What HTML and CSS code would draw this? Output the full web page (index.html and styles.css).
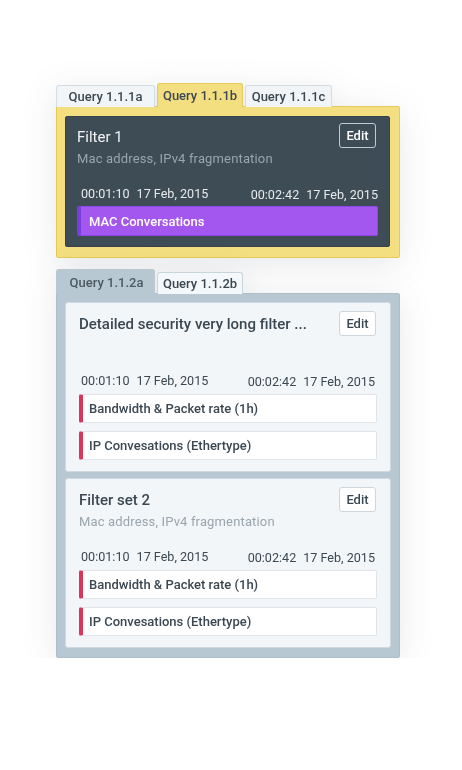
FILE: index.html
```html
<!DOCTYPE html>
<html lang="en">
<head>
<meta charset="utf-8">
<title>Queries</title>
<link rel="stylesheet" href="styles.css">
</head>
<body>
<div class="page">
  <section class="group group--yellow">
    <div class="tabs">
      <div class="tab tab--first">Query 1.1.1a</div>
      <div class="tab tab--active">Query 1.1.1b</div>
      <div class="tab">Query 1.1.1c</div>
    </div>
    <div class="panel">
      <div class="card card--dark">
        <div class="card-head">
          <div class="card-title">Filter 1</div>
          <button class="edit">Edit</button>
        </div>
        <div class="card-sub">Mac address, IPv4 fragmentation</div>
        <div class="times">
          <span class="time"><span>00:01:10</span><span>17 Feb, 2015</span></span>
          <span class="time time--end"><span>00:02:42</span><span>17 Feb, 2015</span></span>
        </div>
        <div class="bars">
          <div class="bar bar--purple">MAC Conversations</div>
        </div>
      </div>
    </div>
  </section>

  <section class="group group--blue">
    <div class="tabs">
      <div class="tab tab--first tab--active">Query 1.1.2a</div>
      <div class="tab">Query 1.1.2b</div>
    </div>
    <div class="panel">
      <div class="card">
        <div class="card-head">
          <div class="card-title">Detailed security very long filter ...</div>
          <button class="edit">Edit</button>
        </div>
        <div class="card-sub"></div>
        <div class="times">
          <span class="time"><span>00:01:10</span><span>17 Feb, 2015</span></span>
          <span class="time time--end"><span>00:02:42</span><span>17 Feb, 2015</span></span>
        </div>
        <div class="bars">
          <div class="bar">Bandwidth &amp; Packet rate (1h)</div>
          <div class="bar">IP Convesations (Ethertype)</div>
        </div>
      </div>
      <div class="card">
        <div class="card-head">
          <div class="card-title">Filter set 2</div>
          <button class="edit">Edit</button>
        </div>
        <div class="card-sub">Mac address, IPv4 fragmentation</div>
        <div class="times">
          <span class="time"><span>00:01:10</span><span>17 Feb, 2015</span></span>
          <span class="time time--end"><span>00:02:42</span><span>17 Feb, 2015</span></span>
        </div>
        <div class="bars">
          <div class="bar">Bandwidth &amp; Packet rate (1h)</div>
          <div class="bar">IP Convesations (Ethertype)</div>
        </div>
      </div>
    </div>
  </section>
</div>
</body>
</html>
```

FILE: styles.css
```css
* { box-sizing: border-box; }

html, body {
  margin: 0;
  background: #ffffff;
}

body {
  font-family: Roboto, "Noto Sans", "Liberation Sans", sans-serif;
  color: #3b4852;
  -webkit-font-smoothing: antialiased;
}

.page {
  padding: 83px 0 0 56px;
  width: 400px;
  display: flex;
  flex-direction: column;
  gap: 12px;
}

.group {
  display: flex;
  flex-direction: column;
  filter: drop-shadow(0 6px 16px rgba(40, 50, 60, 0.11));
}

/* Tabs */
.tabs {
  display: flex;
  align-items: flex-end;
  gap: 2px;
  height: 24px;
  margin-bottom: -1px;
  position: relative;
  z-index: 1;
}

.tab {
  width: 87px;
  height: 22px;
  display: flex;
  align-items: center;
  justify-content: center;
  font-size: 13px;
  font-weight: 500;
  color: #3b4852;
  background: #f2f5f8;
  border: 1px solid #d3dce2;
  border-bottom: none;
  border-radius: 3px 3px 0 0;
  white-space: nowrap;
}

.tab--first {
  width: 99px;
}

.group--yellow .tab--active {
  width: 86px;
  height: 24px;
  background: #f3df80;
  border-color: #e6c957;
  color: #3d4952;
}

.group--blue .tab {
  background: #f5f8fa;
  border-color: #c9d4db;
  width: 86px;
}

.group--blue .tab--active {
  width: 99px;
  height: 25px;
  background: #b8c8d2;
  border-color: #b8c8d2;
  color: #4c5962;
  padding-left: 2px;
}

/* Panels */
.panel {
  display: flex;
  flex-direction: column;
  gap: 6px;
  width: 344px;
}

.group--yellow .panel {
  background: #f3df80;
  border: 1px solid #e6c957;
  border-radius: 0 2px 2px 2px;
  padding: 9px 9px 10px 8px;
}

.group--blue .panel {
  background: #b8c8d2;
  border: 1px solid #adbec9;
  border-radius: 0 2px 2px 2px;
  padding: 8px 8px 9px 8px;
}

/* Cards */
.card {
  background: #f3f6f9;
  border: 1px solid #d0d9df;
  border-radius: 3px;
  padding: 8px 13px 11px 13px;
  display: flex;
  flex-direction: column;
}

.card--dark {
  background: #3e4c56;
  border-color: #36434c;
  border-radius: 2px;
  padding: 6px 11px 10px 11px;
}

.card-head {
  display: flex;
  justify-content: space-between;
  align-items: center;
  height: 25px;
}

.card-title {
  font-size: 15px;
  font-weight: 500;
  color: #3b4852;
  white-space: nowrap;
  padding-top: 1px;
}

.card--dark .card-title {
  font-weight: 400;
  color: #f1f3f5;
  padding-top: 2px;
}

.edit {
  font-family: inherit;
  font-size: 13px;
  font-weight: 500;
  color: #3b4852;
  background: #ffffff;
  border: 1px solid #cdd6dc;
  border-radius: 3px;
  width: 37px;
  height: 25px;
  padding: 0;
  margin-right: 1px;
}

.card--dark .edit {
  background: transparent;
  color: #ffffff;
  border-color: #c3cbd1;
  margin-right: 2px;
}

.card-sub {
  margin-top: 2px;
  height: 16px;
  line-height: 16px;
  font-size: 13px;
  letter-spacing: 0.15px;
  color: #9ba5ad;
}

.card--dark .card-sub {
  margin-top: 3px;
  color: #9aa5ad;
}

.times {
  margin-top: 19px;
  height: 16px;
  display: flex;
  justify-content: space-between;
  align-items: flex-end;
  padding: 0 2px 0 2px;
  font-size: 12.6px;
  line-height: 16px;
  color: #3b4852;
}

.card--dark .times {
  margin-top: 19px;
  padding: 0 0 0 4px;
  color: #e6eaed;
}

.time {
  display: flex;
  gap: 7px;
}

.time--end {
  position: relative;
  top: 1px;
}

.bars {
  margin-top: 5px;
  display: flex;
  flex-direction: column;
  gap: 8px;
}

.card--dark .bars {
  margin-top: 4px;
}

.bar {
  height: 29px;
  display: flex;
  align-items: center;
  padding-left: 6px;
  background: #ffffff;
  border: 1px solid #dfe5ea;
  border-left: 4px solid #d8365b;
  border-radius: 2px;
  font-size: 13px;
  font-weight: 500;
  color: #3b4852;
}

.bar--purple {
  height: 30px;
  background: #a457ef;
  border-color: #8c47e4;
  border-left-color: #7a3de0;
  padding-left: 8px;
  color: #ffffff;
}
```
